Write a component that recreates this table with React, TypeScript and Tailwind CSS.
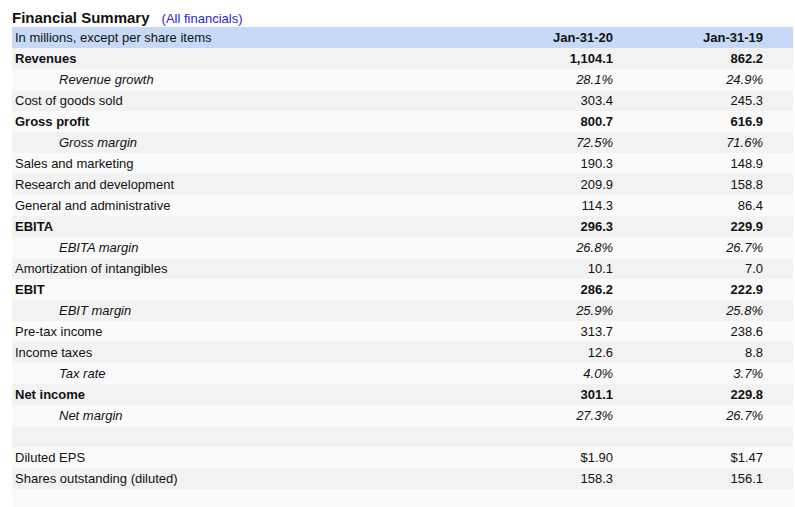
import React from "react";

type Row = { label: string; a: string; b: string; kind: "bold" | "normal" | "italic" | "empty" };

const rows: Row[] = [
  { label: "Revenues", a: "1,104.1", b: "862.2", kind: "bold" },
  { label: "Revenue growth", a: "28.1%", b: "24.9%", kind: "italic" },
  { label: "Cost of goods sold", a: "303.4", b: "245.3", kind: "normal" },
  { label: "Gross profit", a: "800.7", b: "616.9", kind: "bold" },
  { label: "Gross margin", a: "72.5%", b: "71.6%", kind: "italic" },
  { label: "Sales and marketing", a: "190.3", b: "148.9", kind: "normal" },
  { label: "Research and development", a: "209.9", b: "158.8", kind: "normal" },
  { label: "General and administrative", a: "114.3", b: "86.4", kind: "normal" },
  { label: "EBITA", a: "296.3", b: "229.9", kind: "bold" },
  { label: "EBITA margin", a: "26.8%", b: "26.7%", kind: "italic" },
  { label: "Amortization of intangibles", a: "10.1", b: "7.0", kind: "normal" },
  { label: "EBIT", a: "286.2", b: "222.9", kind: "bold" },
  { label: "EBIT margin", a: "25.9%", b: "25.8%", kind: "italic" },
  { label: "Pre-tax income", a: "313.7", b: "238.6", kind: "normal" },
  { label: "Income taxes", a: "12.6", b: "8.8", kind: "normal" },
  { label: "Tax rate", a: "4.0%", b: "3.7%", kind: "italic" },
  { label: "Net income", a: "301.1", b: "229.8", kind: "bold" },
  { label: "Net margin", a: "27.3%", b: "26.7%", kind: "italic" },
  { label: "", a: "", b: "", kind: "empty" },
  { label: "Diluted EPS", a: "$1.90", b: "$1.47", kind: "normal" },
  { label: "Shares outstanding (diluted)", a: "158.3", b: "156.1", kind: "normal" },
  { label: "", a: "", b: "", kind: "empty" },
];

export default function App() {
  return (
    <div
      className="w-[795px] h-[507px] overflow-hidden bg-white text-[#111] text-[13px] leading-none"
      style={{ fontFamily: '"Liberation Sans", Arial, sans-serif' }}
    >
      <div className="pl-[12px] h-[27px] flex items-end pb-[2px]">
        <span className="font-bold text-[15px] text-[#111]">Financial Summary</span>
        <span className="ml-[12px] text-[13px] text-[#2626d9]">(All financials)</span>
      </div>
      <div className="ml-[12px] w-[781px]">
        <div className="grid grid-cols-[451px_150px_150px_30px] h-[21px] items-center bg-[#c6daf8]">
          <div className="pl-[3px]">In millions, except per share items</div>
          <div className="text-right font-bold">Jan-31-20</div>
          <div className="text-right font-bold">Jan-31-19</div>
          <div />
        </div>
        {rows.map((r, i) => {
          const bg = i % 2 === 0 ? "bg-[#f2f2f2]" : "bg-[#fafafa]";
          const style =
            r.kind === "bold" ? "font-bold" : r.kind === "italic" ? "italic" : "";
          return (
            <div
              key={i}
              className={`grid grid-cols-[451px_150px_150px_30px] h-[21px] items-center ${bg} ${style}`}
            >
              <div className={r.kind === "italic" ? "pl-[47px]" : "pl-[3px]"}>{r.label}</div>
              <div className="text-right">{r.a}</div>
              <div className="text-right">{r.b}</div>
              <div />
            </div>
          );
        })}
      </div>
    </div>
  );
}
